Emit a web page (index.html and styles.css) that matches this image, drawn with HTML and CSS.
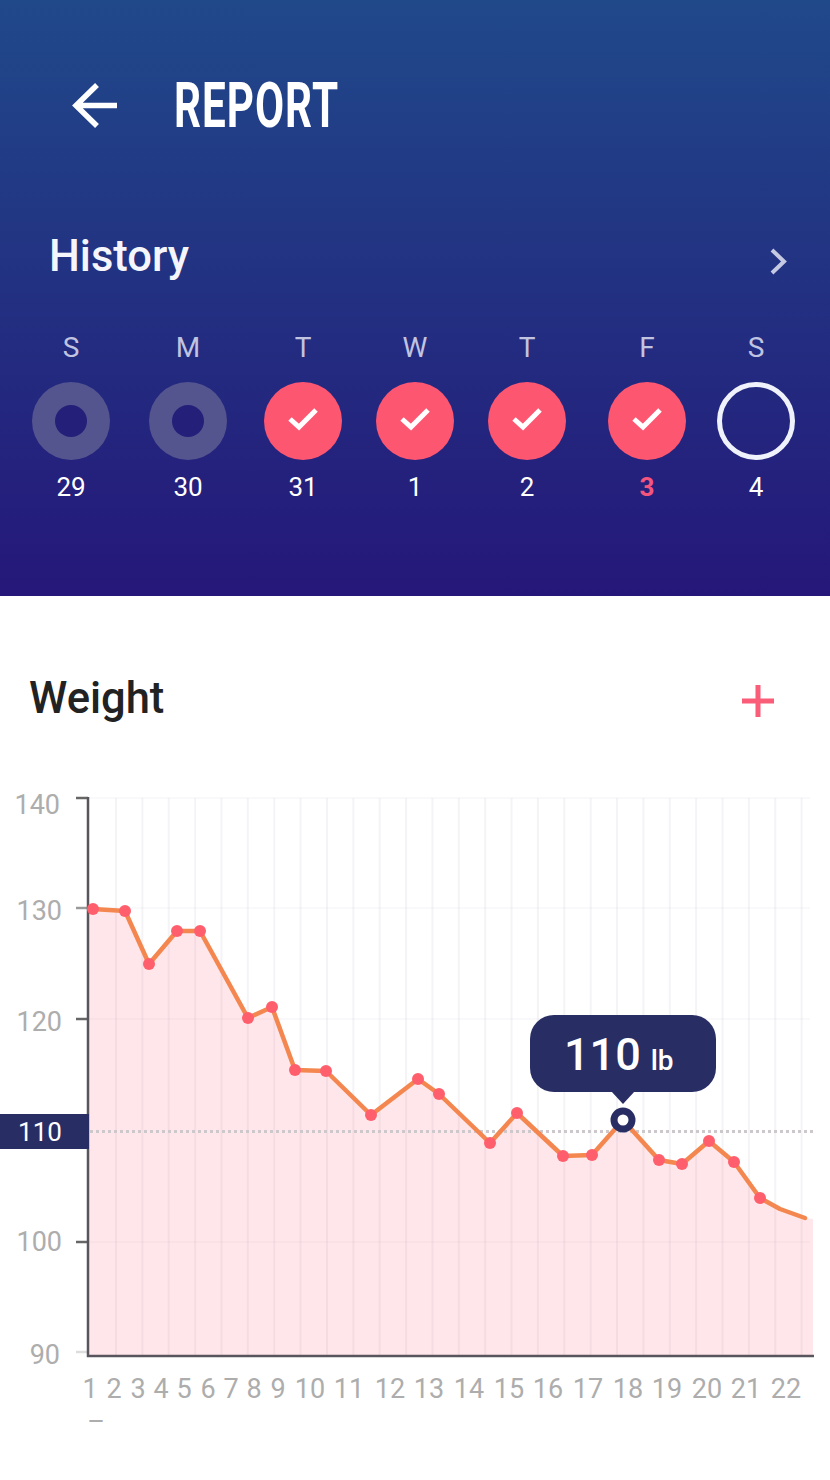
FILE: index.html
```html
<!DOCTYPE html>
<html>
<head>
  <meta charset="UTF-8">
  <title>Report</title>
  <link rel="stylesheet" href="styles.css">
</head>
<body>

  <header class="hero">
    <div class="topbar">
      <svg class="back-icon" viewBox="0 0 50 50">
        <path d="M26 4 L5 24.500 L26 45 M5 24.500 H46"></path>
      </svg>
      <h1 class="title">REPORT</h1>
    </div>

    <div class="history-row">
      <h2 class="history-title">History</h2>
      <svg class="chevron" viewBox="0 0 20 30">
        <path d="M3 3 L15 14.500 L3 26"></path>
      </svg>
    </div>

    <div class="days" id="days"></div>
  </header>

  <section class="weight">
    <div class="weight-head">
      <h2 class="weight-title">Weight</h2>
      <svg class="plus" viewBox="0 0 32 32">
        <path d="M16 0 V32 M0 16 H32"></path>
      </svg>
    </div>
    <svg class="chart" id="chart" viewBox="0 780 830 670"></svg>
  </section>

  <script>
    const CHECK = `<svg class="check" viewBox="0 0 36 28"><path d="M5 14 L14 22 L31 5"></path></svg>`;

    const days = [
      { letter: "S", date: 29, state: "missed" },
      { letter: "M", date: 30, state: "missed" },
      { letter: "T", date: 31, state: "done" },
      { letter: "W", date: 1, state: "done" },
      { letter: "T", date: 2, state: "done" },
      { letter: "F", date: 3, state: "done", today: true },
      { letter: "S", date: 4, state: "open" }
    ];

    document.getElementById("days").innerHTML = days.map(d => `
      <div class="day">
        <span class="day-letter">${d.letter}</span>
        <span class="day-circle ${d.state}">${d.state === "done" ? CHECK : ""}</span>
        <span class="day-date ${d.today ? "today" : ""}">${d.date}</span>
      </div>
    `).join("");

    // weight samples in chart coordinates, last one has no marker
    const points = [
      [93, 909], [125, 911], [149, 964], [177, 931], [200, 931], [248, 1018],
      [272, 1007], [295, 1070], [326, 1071], [371, 1115], [418, 1079], [439, 1094],
      [490, 1143], [517, 1113], [563, 1156], [592, 1155], [623, 1120], [659, 1160],
      [682, 1164], [709, 1141], [734, 1162], [760, 1198], [780, 1209], [805, 1218]
    ];
    const SELECTED = 16;

    const yLabels = [
      { text: "140", x: 60, y: 814, tick: 798, cls: "tick" },
      { text: "130", x: 62, y: 920, tick: 908, cls: "tick soft" },
      { text: "120", x: 62, y: 1031, tick: 1019, cls: "tick" },
      { text: "100", x: 62, y: 1251, tick: 1242, cls: "tick" },
      { text: "90", x: 60, y: 1364, tick: 1352, cls: "tick faint" }
    ];

    const xCenters = [90, 114, 138, 161, 184, 208, 231, 254, 278, 310, 349,
      390, 429, 469, 509, 548, 588, 628, 667, 707, 746, 786];

    let svg = "";

    for (let i = 0; i < 27; i++) {
      const x = 116 + i * 26.37;
      svg += `<line class="grid" x1="${x}" y1="798" x2="${x}" y2="1355"></line>`;
    }
    [798, 908, 1019, 1242].forEach(y => {
      svg += `<line class="grid flat" x1="89" y1="${y}" x2="810" y2="${y}"></line>`;
    });

    const linePts = points.map(p => p.join(",")).join(" ");
    svg += `<polygon class="area" points="89,909 ${linePts} 813,1219 813,1355 89,1355"></polygon>`;

    yLabels.forEach(l => {
      svg += `<text class="axis-label" text-anchor="end" x="${l.x}" y="${l.y}">${l.text}</text>`;
      svg += `<line class="${l.cls}" x1="76" y1="${l.tick}" x2="88" y2="${l.tick}"></line>`;
    });

    xCenters.forEach((x, i) => {
      svg += `<text class="axis-label" text-anchor="middle" x="${x}" y="1398">${i + 1}</text>`;
    });
    svg += `<text class="axis-label" text-anchor="middle" x="96" y="1431">–</text>`;

    svg += `<line class="goal" x1="90" y1="1131.500" x2="816" y2="1131.500"></line>`;
    svg += `<polyline class="line" points="${linePts}"></polyline>`;
    svg += `<path class="axis" d="M88 797 V1356 H814"></path>`;

    points.forEach((p, i) => {
      if (i !== SELECTED && i < 22) {
        svg += `<circle class="marker" cx="${p[0]}" cy="${p[1]}" r="6"></circle>`;
      }
    });

    svg += `<rect class="goal-badge" x="0" y="1114" width="89" height="35"></rect>`;
    svg += `<text class="goal-text" text-anchor="middle" x="40" y="1141">110</text>`;

    const sel = points[SELECTED];
    svg += `<circle class="selected" cx="${sel[0]}" cy="${sel[1]}" r="9"></circle>`;
    svg += `<rect class="tip" x="530" y="1015" width="186" height="77" rx="24"></rect>`;
    svg += `<path class="tip" d="M611 1091 H635 L623 1104 Z"></path>`;
    svg += `<text class="tip-value" x="564" y="1070">110<tspan class="tip-unit" dx="10">lb</tspan></text>`;

    document.getElementById("chart").innerHTML = svg;
  </script>

</body>
</html>
```

FILE: styles.css
```css
* { box-sizing: border-box; }
body { margin: 0; background: #fff; font-family: Roboto, "Liberation Sans", sans-serif; }
h1, h2 { margin: 0; }

.hero { height: 596px; background: linear-gradient(#20498a, #251779); color: #f5f6fc; overflow: hidden; }

.topbar { display: flex; align-items: center; padding: 76px 0 0 71px; height: 136px; }
.back-icon { width: 50px; height: 50px; fill: none; stroke: #fff; stroke-width: 5.500; }
.title { margin-left: 53px; font-size: 63px; line-height: 60px; font-weight: 700; color: #fff; letter-spacing: 1.500px; transform: scaleX(0.67); transform-origin: left center; }

.history-row { display: flex; justify-content: space-between; align-items: center; padding: 0 41px 0 49px; margin-top: 94px; height: 54px; }
.history-title { font-size: 43.500px; line-height: 54px; font-weight: 500; }
.chevron { width: 20px; height: 30px; margin-top: 9px; fill: none; stroke: #c6c9e2; stroke-width: 4; }

.days { display: grid; grid-template-columns: 117px 115px 112px 112px 120px 109px 78px; padding-left: 32px; margin-top: 46px; }
.day { width: 78px; display: flex; flex-direction: column; align-items: center; }
.day-letter { font-size: 28px; line-height: 36px; color: #c0c4e0; }
.day-circle { width: 78px; height: 78px; margin-top: 16px; border-radius: 50%; display: flex; align-items: center; justify-content: center; }
.day-circle.missed { background: #54548f; }
.day-circle.missed::after { content: ""; width: 32px; height: 32px; border-radius: 50%; background: #241f79; }
.day-circle.done { background: #fd5671; }
.day-circle.open { border: 5px solid #f0f2fb; }
.check { width: 36px; height: 28px; margin-top: -4px; fill: none; stroke: #fff; stroke-width: 5; }
.day-date { margin-top: 9px; font-size: 26px; line-height: 36px; color: #fff; }
.day-date.today { color: #f4557d; font-weight: 700; }

.weight-head { display: flex; justify-content: space-between; align-items: center; padding: 0 56px 0 29px; margin-top: 76px; height: 54px; }
.weight-title { font-size: 43.500px; line-height: 54px; font-weight: 500; color: #222; }
.plus { width: 32px; height: 32px; margin-top: 4px; fill: none; stroke: #fa5d78; stroke-width: 5; }

.chart { display: block; width: 830px; height: 670px; margin-top: 54px; }
.grid { stroke: #70709a; stroke-opacity: 0.08; stroke-width: 2; }
.grid.flat { stroke-opacity: 0.04; }
.area { fill: #ff5f78; fill-opacity: 0.155; }
.axis { fill: none; stroke: #58565c; stroke-width: 2.500; }
.tick { stroke: #666; stroke-width: 2.500; }
.tick.soft { stroke: #999; }
.tick.faint { stroke: #ddd; }
.axis-label { font-size: 27px; fill: #adadad; }
.goal { stroke: #cdc8cc; stroke-width: 3; stroke-dasharray: 3 3; }
.line { fill: none; stroke: #f4874f; stroke-width: 4.500; stroke-linejoin: round; stroke-linecap: round; }
.marker { fill: #ff5f6d; }
.goal-badge, .tip { fill: #282e63; }
.goal-text { font-size: 26px; fill: #fff; }
.selected { fill: #fff; stroke: #282e63; stroke-width: 7; }
.tip-value { font-size: 45px; font-weight: 500; fill: #fff; }
.tip-unit { font-size: 28px; }
```
